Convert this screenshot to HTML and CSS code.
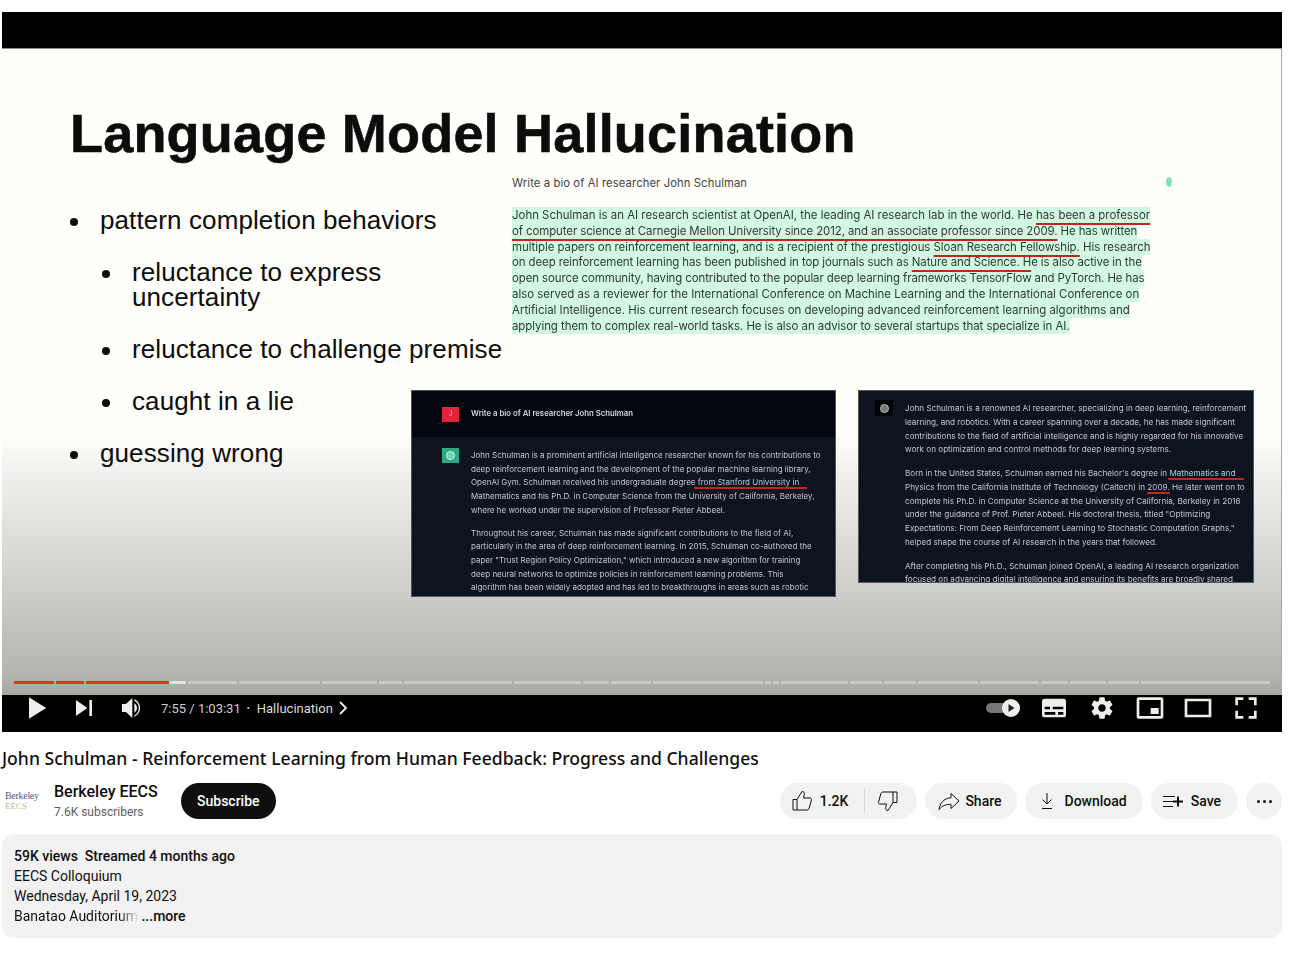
FILE: index.html
```html
<!DOCTYPE html>
<html>
<head>
	<title>John Schulman - Reinforcement Learning from Human Feedback</title>
	<meta charset="utf-8">
	<link rel="stylesheet" href="styles.css">
</head>
<body>
	<div class="player">
		<div class="topbar"></div>
		<div class="slide">
			<h1 class="slide-title">Language Model Hallucination</h1>
			<div class="slide-body">
				<ul class="points">
					<li>pattern completion behaviors
						<ul>
							<li>reluctance to express<br>uncertainty</li>
							<li>reluctance to challenge premise</li>
							<li>caught in a lie</li>
						</ul>
					</li>
					<li>guessing wrong</li>
				</ul>
				<div class="bio">
					<p class="bio-ask">Write a bio of AI researcher John Schulman</p>
					<div class="bio-lines">
						<div><span class="hl">John Schulman is an AI research scientist at OpenAI, the leading AI research lab in the world. He <u>has been a professor</u></span></div>
						<div class="tight"><span class="hl"><u>of computer science at Carnegie Mellon University since 2012, and an associate professor since 2009.</u> He has written</span></div>
						<div class="snug"><span class="hl">multiple papers on reinforcement learning, and is a recipient of the prestigious <u>Sloan Research Fellowship.</u> His research</span></div>
						<div class="tight"><span class="hl">on deep reinforcement learning has been published in top journals such as <u>Nature and Science. H</u>e is also active in the</span></div>
						<div class="tight"><span class="hl">open source community, having contributed to the popular deep learning frameworks TensorFlow and PyTorch. He has</span></div>
						<div><span class="hl">also served as a reviewer for the International Conference on Machine Learning and the International Conference on</span></div>
						<div><span class="hl">Artificial Intelligence. His current research focuses on developing advanced reinforcement learning algorithms and</span></div>
						<div class="snug"><span class="hl">applying them to complex real-world tasks. He is also an advisor to several startups that specialize in AI.</span></div>
					</div>
				</div>
			</div>
			<span class="drop"></span>

			<div class="panel panel-a">
				<div class="ask-row">
					<span class="badge badge-red">J</span>
					<b>Write a bio of AI researcher John Schulman</b>
				</div>
				<div class="answer-row">
					<span class="badge badge-green"><i></i></span>
					<div class="answer">
						<p>John Schulman is a prominent artificial intelligence researcher known for his contributions to<br>
						deep reinforcement learning and the development of the popular machine learning library,<br>
						OpenAI Gym. Schulman received his undergraduate degree <u class="over-a">from Stanford University in</u><br>
						Mathematics and his Ph.D. in Computer Science from the University of California, Berkeley,<br>
						where he worked under the supervision of Professor Pieter Abbeel.</p>
						<p>Throughout his career, Schulman has made significant contributions to the field of AI,<br>
						particularly in the area of deep reinforcement learning. In 2015, Schulman co-authored the<br>
						paper "Trust Region Policy Optimization," which introduced a new algorithm for training<br>
						deep neural networks to optimize policies in reinforcement learning problems. This<br>
						algorithm has been widely adopted and has led to breakthroughs in areas such as robotic</p>
					</div>
				</div>
			</div>

			<div class="panel panel-b">
				<span class="badge badge-dark"><i></i></span>
				<div class="answer">
					<p>John Schulman is a renowned AI researcher, specializing in deep learning, reinforcement<br>
					learning, and robotics. With a career spanning over a decade, he has made significant<br>
					contributions to the field of artificial intelligence and is highly regarded for his innovative<br>
					work on optimization and control methods for deep learning systems.</p>
					<p>Born in the United States, Schulman earned his Bachelor's degree in <u class="over-b">Mathematics and</u><br>
					Physics from the California Institute of Technology (Caltech) in <u>2009.</u> He later went on to<br>
					complete his Ph.D. in Computer Science at the University of California, Berkeley in 2016<br>
					under the guidance of Prof. Pieter Abbeel. His doctoral thesis, titled "Optimizing<br>
					Expectations: From Deep Reinforcement Learning to Stochastic Computation Graphs,"<br>
					helped shape the course of AI research in the years that followed.</p>
					<p>After completing his Ph.D., Schulman joined OpenAI, a leading AI research organization<br>
					focused on advancing digital intelligence and ensuring its benefits are broadly shared</p>
				</div>
			</div>

			<div class="progress">
				<span class="seg red" style="width:40px"></span>
				<span class="seg red" style="width:28px"></span>
				<span class="seg buffered" style="width:100px"><em style="width:83px"></em></span>
				<span class="seg" style="width:49px"></span>
				<span class="seg" style="width:81px"></span>
				<span class="seg" style="width:55px"></span>
				<span class="seg" style="width:23px"></span>
				<span class="seg" style="width:108px"></span>
				<span class="seg" style="width:67px"></span>
				<span class="seg" style="width:26px"></span>
				<span class="seg" style="width:40px"></span>
				<span class="seg" style="width:110px"></span>
				<span class="seg" style="width:6px"></span>
				<span class="seg" style="width:6px"></span>
				<span class="seg" style="width:67px"></span>
				<span class="seg" style="width:32px"></span>
				<span class="seg" style="width:32px"></span>
				<span class="seg" style="width:60px"></span>
				<span class="seg" style="width:59px"></span>
				<span class="seg" style="width:27px"></span>
				<span class="seg" style="width:36px"></span>
				<span class="seg" style="width:31px"></span>
				<span class="seg" style="flex:1"></span>
			</div>
		</div>
		<div class="controls">
			<svg class="ctl" viewBox="0 0 36 36"><path d="M12 26l6.500-4v-8L12 10zM18.500 22l6.500-4-6.500-4z"/></svg>
			<svg class="ctl ctl-next" viewBox="0 0 36 36"><path d="M12 24l8.500-6L12 12zM22 12v12h2V12z"/></svg>
			<svg class="ctl" viewBox="0 0 36 36"><path d="M9.700 21h3l4.800 4.500v-15L12.700 15h-3zM19 14.500v7c1.200-.7 2-2 2-3.500s-.8-2.800-2-3.500zM19 11.500c2.500 1 4.300 3.500 4.300 6.500s-1.800 5.500-4.300 6.500v-1c2-.9 3.300-3 3.300-5.500s-1.300-4.600-3.300-5.500z"/></svg>
			<span class="time">7:55 / 1:03:31</span>
			<span class="dot">•</span>
			<span class="chapter">Hallucination</span>
			<svg class="chev" viewBox="0 0 12 16"><path d="M3 2l6 6-6 6" /></svg>
			<span class="spring"></span>
			<span class="autoplay"><span class="knob"><svg viewBox="0 0 12 12"><path d="M3.500 2l6 4-6 4z"/></svg></span></span>
			<svg class="ctl" viewBox="0 0 36 36"><path fill-rule="evenodd" d="M11 11h14a2 2 0 0 1 2 2v10a2 2 0 0 1-2 2H11a2 2 0 0 1-2-2V13a2 2 0 0 1 2-2zM11 17h4v2h-4zM17 17h8v2h-8zM11 21h8v2h-8zM21 21h4v2h-4z"/></svg>
			<svg class="ctl" viewBox="0 0 36 36"><path fill-rule="evenodd" d="m23.940 18.780c.03-.25.05-.51.05-.78s-.02-.52-.05-.78l1.680-1.320c.15-.12.19-.33.09-.51l-1.600-2.760c-.09-.17-.31-.24-.48-.17l-1.990.8c-.41-.32-.86-.58-1.350-.78l-.30-2.120c-.02-.19-.19-.33-.39-.33h-3.200c-.2 0-.36.14-.39.33l-.3 2.120c-.48.2-.93.47-1.350.78l-1.990-.8c-.18-.07-.39 0-.48.17l-1.600 2.760c-.10.17-.05.39.09.51l1.680 1.320c-.03.25-.05.52-.05.78s.02.52.05.78l-1.680 1.320c-.15.12-.19.33-.09.51l1.600 2.760c.09.17.31.24.48.17l1.990-.8c.41.32.86.58 1.350.78l.3 2.120c.02.19.19.33.39.33h3.200c.2 0 .36-.14.39-.33l.3-2.120c.48-.2.93-.47 1.350-.78l1.990.8c.18.07.39 0 .48-.17l1.600-2.760c.09-.17.05-.39-.09-.51zm-5.940 2.010c-1.540 0-2.800-1.250-2.800-2.800 0-1.540 1.250-2.800 2.800-2.800 1.540 0 2.800 1.250 2.800 2.800 0 1.540-1.250 2.800-2.800 2.800z"/></svg>
			<svg class="ctl" viewBox="0 0 36 36"><path fill-rule="evenodd" d="M9.500 10h17a1.500 1.500 0 0 1 1.500 1.500v13a1.500 1.500 0 0 1-1.500 1.500h-17A1.500 1.500 0 0 1 8 24.500v-13A1.500 1.500 0 0 1 9.500 10zM10 12v12h16V12z"/><path d="M18.500 18h6v4.500h-6z"/></svg>
			<svg class="ctl" viewBox="0 0 36 36"><path fill-rule="evenodd" d="M8 11h20v14H8zM10 13v10h16V13z"/></svg>
			<svg class="ctl" viewBox="0 0 36 36"><path d="M10 16h2v-4h4v-2h-6zM20 10v2h4v4h2v-6zM24 24h-4v2h6v-6h-2zM12 20h-2v6h6v-2h-4z"/></svg>
		</div>
	</div>

	<h2 class="video-title">John Schulman - Reinforcement Learning from Human Feedback: Progress and Challenges</h2>

	<div class="meta-row">
		<div class="avatar"><span class="av-top">Berkeley</span><span class="av-bot">EECS</span></div>
		<div class="channel">
			<div class="channel-name">Berkeley EECS</div>
			<div class="subs">7.6K subscribers</div>
		</div>
		<button class="subscribe">Subscribe</button>
		<div class="actions">
			<div class="pill like-group">
				<span class="like">
					<svg class="ico" viewBox="0 0 24 24"><path d="M3 10.500h4V21H3zM7 10.500l5-8c1.700 0 2.600 1.100 2.300 2.700L13.600 9H20c1 0 1.700 1 1.400 2l-2.200 8.200c-.2 1-1 1.800-2 1.800H7"/></svg>
					<span>1.2K</span>
				</span>
				<span class="dislike">
					<svg class="ico" viewBox="0 0 24 24"><path d="M21 13.500h-4V3h4zM17 13.500l-5 8c-1.700 0-2.600-1.100-2.300-2.700l.7-3.800H4c-1 0-1.700-1-1.400-2l2.200-8.200C5 3.800 5.800 3 6.800 3H17"/></svg>
				</span>
			</div>
			<div class="pill pill-share">
				<svg class="ico" viewBox="0 0 24 24"><path d="M14 4.500l8 7.500-8 7.500v-4.200c-4.800 0-8.700 1.100-12 5.200.8-6 4.500-11.200 12-11.800z"/></svg>
				Share
			</div>
			<div class="pill">
				<svg class="ico" viewBox="0 0 24 24"><path d="M10 4v11M5.500 10.500l4.500 4.500 4.500-4.500M5 19.500h10"/></svg>
				Download
			</div>
			<div class="pill pill-save">
				<svg class="ico" viewBox="0 0 24 24"><path d="M0 7.500h12M0 12.500h10M0 17.500h10"/><path class="thick" d="M10 12.500h10M15 7.500v10"/></svg>
				Save
			</div>
			<div class="more-btn"><i></i><i></i><i></i></div>
		</div>
	</div>

	<div class="desc">
		<div class="desc-stats"><b>59K views</b><b>Streamed 4 months ago</b></div>
		<div>EECS Colloquium</div>
		<div>Wednesday, April 19, 2023</div>
		<div><span class="fade">Banatao Auditorium</span> <b>...more</b></div>
	</div>
</body>
</html>
```

FILE: styles.css
```css
*{
	box-sizing: border-box;
}
html,body{
	margin: 0;
	padding: 0;
	background: #fff;
}
body{
	width: 1293px;
	height: 955px;
	padding: 12px 11px 0 2px;
	overflow: hidden;
	font-family: Roboto, "Liberation Sans", sans-serif;
	color: #0f0f0f;
}
p{
	margin: 0;
}

/* player */
.player{
	width: 1280px;
	height: 720px;
	background: #000;
}
.topbar{
	height: 36px;
	background: #000;
}
.slide{
	position: relative;
	height: 647px;
	padding: 49px 0 0 68px;
	border-top: 1px solid #8c8c8c;
	border-right: 1px solid #a8a8a8;
	background: linear-gradient(to bottom,#fefefb 0,#fefefb 385px,#f0f0ee 425px,#b4b5af 625px,#a6a7a3 647px);
	font-family: "Liberation Sans", Arial, sans-serif;
	color: #0c0c0c;
	overflow: hidden;
}
.slide-title{
	margin: 0;
	font-size: 54px;
	line-height: 70px;
	font-weight: bold;
	letter-spacing: .2px;
	-webkit-text-stroke: .6px #0c0c0c;
	white-space: nowrap;
}
.slide-body{
	display: flex;
}
.points{
	list-style: none;
	margin: 40px 0 0;
	padding: 0 0 0 30px;
	width: 442px;
	flex: none;
	font-size: 26px;
	line-height: 25.7px;
	letter-spacing: .1px;
	white-space: nowrap;
}
.points li{
	position: relative;
}
.points li::before{
	content: "";
	position: absolute;
	left: -30px;
	top: 10px;
	width: 8px;
	height: 8px;
	border-radius: 50%;
	background: #0c0c0c;
}
.points ul{
	list-style: none;
	margin: 0;
	padding: 0 0 0 32px;
}
.points ul li{
	margin-top: 26px;
}
.points>li+li{
	margin-top: 26px;
}
.bio{
	font-family: Inter, "Liberation Sans", sans-serif;
	font-size: 11.45px;
	color: #444;
}
.bio-ask{
	margin-top: 5px;
	font-size: 11.25px;
	line-height: 20px;
	letter-spacing: .1px;
}
.bio-lines{
	margin-top: 15px;
	line-height: 15.8px;
	color: #2c3a30;
	white-space: nowrap;
	filter: blur(.3px);
}
.tight{
	letter-spacing: -.09px;
}
.snug{
	letter-spacing: -.05px;
}
.hl{
	background: #d2f8e1;
	padding: 1px 0;
}
.bio u{
	position: relative;
	z-index: 1;
	text-decoration: underline #c8221c 2px;
	text-underline-offset: 4px;
	text-decoration-skip-ink: none;
}
.drop{
	position: absolute;
	left: 1164px;
	top: 128px;
	width: 6px;
	height: 10px;
	border-radius: 50%;
	background: #7fe0c4;
}

/* dark panels on the slide */
.panel{
	position: absolute;
	font-family: Inter, "Liberation Sans", sans-serif;
	font-size: 8px;
	line-height: 13.7px;
	color: #c4c7cc;
	background: #0e1320;
	overflow: hidden;
	white-space: nowrap;
	border: 1px solid #555;
	filter: blur(.4px);
}
.panel u{
	text-decoration: none;
	border-bottom: 2px solid #c8221c;
}
.panel u.over-a{
	padding: 0 8px 0 4px;
	margin: 0 -8px 0 -4px;
}
.panel u.over-b{
	padding: 0 9px 0 1px;
	margin: 0 -9px 0 -1px;
}
.panel-a{
	left: 409px;
	top: 341px;
	width: 425px;
	height: 207px;
}
.panel-b{
	left: 856px;
	top: 341px;
	width: 396px;
	height: 193px;
	display: flex;
	padding: 9px 0 0 16px;
	gap: 12px;
	font-size: 8.15px;
	line-height: 13.75px;
}
.panel-b .answer{
	padding-top: 2px;
}
.answer p+p{
	margin-top: 10px;
}
.panel-a .answer p+p{
	margin-top: 9px;
}
.ask-row{
	display: flex;
	align-items: center;
	gap: 12px;
	height: 46px;
	padding: 0 0 0 30px;
	background: #03060f;
	color: #d8d8d8;
}
.ask-row b{
	font-size: 7.75px;
	font-weight: 600;
}
.answer-row{
	display: flex;
	gap: 12px;
	padding: 11px 0 0 30px;
}
.answer-row .answer{
	padding-top: 1px;
}
.badge{
	flex: none;
	display: flex;
	align-items: center;
	justify-content: center;
	width: 17px;
	height: 15px;
	font-size: 7px;
	color: #f3a0a8;
}
.badge-red{
	background: #e1263c;
}
.badge-green{
	background: #2fa884;
}
.badge-dark{
	background: #020308;
	width: 18px;
	height: 16px;
}
.badge i{
	width: 9px;
	height: 9px;
	border-radius: 50%;
	background: #6fd3b4;
	border: 1px solid #cdeee3;
}
.badge-dark i{
	background: #777;
	border-color: #bbb;
}
.progress{
	position: absolute;
	left: 12px;
	right: 11px;
	bottom: 11px;
	height: 3px;
	display: flex;
	gap: 2px;
}
.seg{
	flex: none;
	height: 3px;
	background: #c8c8c4;
}
.seg.red{
	background: #e0331c;
}
.seg.buffered{
	background: #e4e4e0;
}
.seg em{
	display: block;
	height: 3px;
	background: #e0331c;
}
.controls{
	display: flex;
	align-items: center;
	height: 37px;
	padding: 0 12px 11px 11px;
	background: #000;
	color: #ddd;
	font-size: 13px;
}
.ctl{
	flex: none;
	width: 48px;
	height: 48px;
	fill: #eee;
}
.ctl-next{
	margin-left: -1px;
	margin-right: 1px;
}
.time{
	margin-left: 4px;
	color: #cfcfcf;
}
.dot{
	margin: 0 7px 0 6px;
	font-size: 9px;
}
.chev{
	width: 12px;
	height: 16px;
	margin-left: 4px;
	fill: none;
	stroke: #eee;
	stroke-width: 1.8;
}
.spring{
	flex: 1;
}
.autoplay{
	position: relative;
	width: 34px;
	height: 10px;
	margin-right: 10px;
	border-radius: 5px;
	background: #777;
}
.knob{
	position: absolute;
	right: 0;
	top: -4px;
	width: 18px;
	height: 18px;
	border-radius: 50%;
	background: #eee;
	display: flex;
	align-items: center;
	justify-content: center;
}
.knob svg{
	width: 12px;
	height: 12px;
	fill: #222;
}

/* below the player */
.video-title{
	margin: 14px 0 0;
	font-family: "Noto Sans", Roboto, sans-serif;
	font-size: 17.6px;
	line-height: 24px;
	font-weight: 500;
	white-space: nowrap;
}
.meta-row{
	display: flex;
	align-items: center;
	height: 36px;
	margin-top: 13px;
}
.avatar{
	width: 40px;
	display: flex;
	flex-direction: column;
	padding-left: 3px;
	font-family: "Liberation Serif", serif;
	font-size: 10px;
	line-height: 10px;
}
.av-top{
	color: #4c5a86;
	letter-spacing: -0.3px;
}
.av-bot{
	color: #d2b084;
	font-size: 9px;
}
.channel{
	width: 127px;
	margin-left: 12px;
}
.channel-name{
	font-size: 16px;
	line-height: 22px;
	font-weight: 500;
}
.subs{
	font-size: 12px;
	line-height: 18px;
	color: #606060;
}
.subscribe{
	height: 36px;
	padding: 0 16px;
	border: 0;
	border-radius: 18px;
	background: #0f0f0f;
	color: #fff;
	font-family: inherit;
	font-size: 14px;
	font-weight: 500;
}
.actions{
	display: flex;
	gap: 8px;
	margin-left: auto;
}
.pill{
	display: flex;
	align-items: center;
	gap: 4px;
	height: 36px;
	padding: 0 16px 0 12px;
	border-radius: 18px;
	background: #f2f2f2;
	font-size: 14px;
	font-weight: 500;
}
.pill-share{
	padding-right: 15px;
}
.pill-save{
	padding-right: 17px;
}
.like-group{
	padding: 0;
	gap: 0;
}
.like{
	display: flex;
	align-items: center;
	gap: 6px;
	height: 24px;
	padding: 0 16px 0 10px;
	border-right: 1px solid #d9d9d9;
}
.dislike{
	display: flex;
	padding: 0 17px 0 11px;
}
.ico{
	flex: none;
	width: 24px;
	height: 24px;
	fill: none;
	stroke: #0f0f0f;
	stroke-width: 1;
	overflow: visible;
}
.ico .thick{
	stroke-width: 2;
}
.more-btn{
	display: flex;
	align-items: center;
	justify-content: center;
	gap: 3px;
	width: 36px;
	height: 36px;
	border-radius: 50%;
	background: #f2f2f2;
}
.more-btn i{
	width: 3px;
	height: 3px;
	border-radius: 50%;
	background: #0f0f0f;
}
.desc{
	width: 1280px;
	height: 104px;
	margin-top: 15px;
	padding: 12px;
	border-radius: 12px;
	background: #f2f2f2;
	font-size: 14px;
	line-height: 20px;
}
.desc b{
	font-weight: 500;
}
.desc-stats{
	display: flex;
	gap: 7px;
}
.fade{
	background: linear-gradient(to right,#0f0f0f 85%,#e6e6e6 100%);
	-webkit-background-clip: text;
	background-clip: text;
	color: transparent;
}
```
